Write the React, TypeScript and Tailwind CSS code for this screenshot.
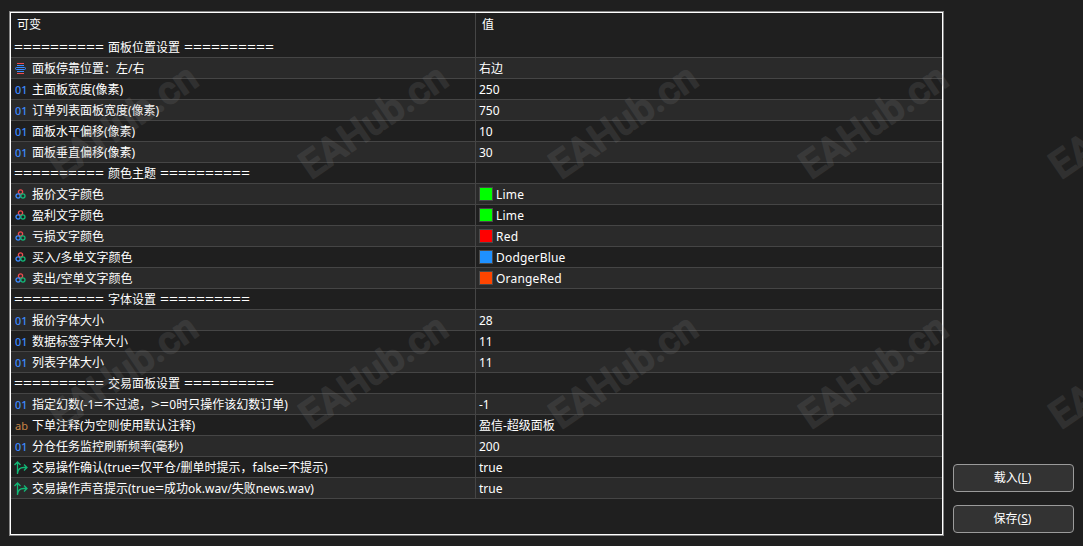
import type { ReactNode } from 'react';
import clsx from 'clsx';

type IconKind = 'enum' | 'int' | 'color' | 'string' | 'bool';

type Param = {
  label: string;
  icon?: IconKind;
  value?: string;
  swatch?: string;
};

const params: Param[] = [
  { label: '========== 面板位置设置 ==========' },
  { icon: 'enum', label: '面板停靠位置：左/右', value: '右边' },
  { icon: 'int', label: '主面板宽度(像素)', value: '250' },
  { icon: 'int', label: '订单列表面板宽度(像素)', value: '750' },
  { icon: 'int', label: '面板水平偏移(像素)', value: '10' },
  { icon: 'int', label: '面板垂直偏移(像素)', value: '30' },
  { label: '========== 颜色主题 ==========' },
  { icon: 'color', label: '报价文字颜色', value: 'Lime', swatch: 'bg-[#00ff00]' },
  { icon: 'color', label: '盈利文字颜色', value: 'Lime', swatch: 'bg-[#00ff00]' },
  { icon: 'color', label: '亏损文字颜色', value: 'Red', swatch: 'bg-[#ff0000]' },
  { icon: 'color', label: '买入/多单文字颜色', value: 'DodgerBlue', swatch: 'bg-[#1e90ff]' },
  { icon: 'color', label: '卖出/空单文字颜色', value: 'OrangeRed', swatch: 'bg-[#ff4500]' },
  { label: '========== 字体设置 ==========' },
  { icon: 'int', label: '报价字体大小', value: '28' },
  { icon: 'int', label: '数据标签字体大小', value: '11' },
  { icon: 'int', label: '列表字体大小', value: '11' },
  { label: '========== 交易面板设置 ==========' },
  { icon: 'int', label: '指定幻数(-1=不过滤，>=0时只操作该幻数订单)', value: '-1' },
  { icon: 'string', label: '下单注释(为空则使用默认注释)', value: '盈信-超级面板' },
  { icon: 'int', label: '分仓任务监控刷新频率(毫秒)', value: '200' },
  { icon: 'bool', label: '交易操作确认(true=仅平仓/删单时提示，false=不提示)', value: 'true' },
  { icon: 'bool', label: '交易操作声音提示(true=成功ok.wav/失败news.wav)', value: 'true' },
];

const EnumIcon = () => (
  <svg width="12" height="12" viewBox="0 0 12 12" fill="none">
    <path d="M2 .5h7M2 10.5h7" stroke="#f04a4e" />
    <path d="M2 2.5h7M2 8.5h7" stroke="#3d8bff" />
    <rect x=".5" y="4.5" width="10" height="2" rx="1" stroke="#3d8bff" />
  </svg>
);

const ColorIcon = () => (
  <svg width="12" height="12" viewBox="0 0 12 12" fill="none" strokeWidth="1.3">
    <circle cx="5.5" cy="3" r="2.1" stroke="#f04a4e" />
    <circle cx="3.1" cy="7" r="2.1" stroke="#3d8bff" />
    <circle cx="7.9" cy="7" r="2.1" stroke="#12b876" />
  </svg>
);

const BoolIcon = () => (
  <svg
    className="-ml-px"
    width="14"
    height="14"
    viewBox="0 0 14 14"
    fill="none"
    stroke="#12b876"
    strokeWidth="1.3"
  >
    <path d="M3.5 13V1M.5 4l3-3 3 3" />
    <path d="M3.5 12C4 8.5 6.5 6.5 9.5 6.5h3.5M10 3.5l3 3-3 3" />
  </svg>
);

const ParamIcon = ({ kind }: { kind: IconKind }) => {
  switch (kind) {
    case 'enum':
      return <EnumIcon />;
    case 'color':
      return <ColorIcon />;
    case 'bool':
      return <BoolIcon />;
    case 'string':
      return <span className="text-[11px] leading-[18px] text-[#c98547]">ab</span>;
    default:
      return (
        <span className="origin-left scale-x-[1.08] text-[10px] leading-[18px] font-medium text-[#3d8bff]">
          01
        </span>
      );
  }
};

// Comparison signs take a wide 9px cell each
const WideSigns = ({ text }: { text: string }) => (
  <span className="inline-block whitespace-pre [word-spacing:1px]">
    {text.split(/([=>])/).map((part, index) =>
      part === '=' || part === '>' ? (
        <span key={index} className="inline-block w-[9px]">
          <span className="inline-block origin-left scale-x-[1.31]">{part}</span>
        </span>
      ) : (
        part
      )
    )}
  </span>
);

const ParamRow = ({ param, striped }: { param: Param; striped: boolean }) => {
  const { label, icon, value, swatch } = param;
  return (
    <div className={clsx('flex h-[21px] border-b border-[#454545]', striped && 'bg-[#2a2a2a]')}>
      <div className="flex w-[465px] items-center border-r border-[#454545] pt-[2px] pl-[3px]">
        {icon && (
          <span className="flex w-[18px] items-center pl-px">
            <ParamIcon kind={icon} />
          </span>
        )}
        <WideSigns text={label} />
      </div>
      <div className="flex items-center gap-[3px] pl-[3px]">
        {swatch && <span className={clsx('size-[14px] border border-[#4a4a4a]', swatch)}></span>}
        <span className={clsx('pt-[2px]', swatch && 'tracking-[0.2px]')}>{value}</span>
      </div>
    </div>
  );
};

const ActionButton = ({ children }: { children: ReactNode }) => (
  <button className="h-7 w-[121px] rounded-[4px] border border-[#9b9b9b] bg-[#333333] pr-[2px] text-[12px]">
    {children}
  </button>
);

const Watermark = () => (
  <svg
    className="pointer-events-none absolute inset-0"
    width="1083"
    height="546"
    viewBox="0 0 1083 546"
  >
    {[180, 430].map((y) =>
      [61, 311, 561, 811, 1061].map((x) => (
        <g key={`${x}-${y}`} opacity="0.18">
          <text
            transform={`translate(${x} ${y}) rotate(-34.5)`}
            className="font-[Roboto] text-[38.4px] font-medium"
            fill="#808080"
            stroke="#808080"
            strokeWidth="1.6"
            strokeLinejoin="round"
          >
            EAHub.cn
          </text>
        </g>
      ))
    )}
  </svg>
);

export default function App() {
  return (
    <div className="relative flex h-[546px] w-[1083px] gap-[9px] overflow-hidden bg-[#1f1f1f] pt-[11px] pl-[9px] font-['Noto_Sans','Noto_Sans_CJK_SC',sans-serif] text-[12px] leading-[20px] text-white">
      <div className="h-[525px] w-[935px] border border-[#858585]">
        <div className="h-full border border-white">
          <div className="flex h-6">
            <div className="w-[465px] border-r border-[#454545] pt-[2px] pl-[6px]">可变</div>
            <div className="pt-[2px] pl-[6px]">值</div>
          </div>
          {params.map((param, index) => (
            <ParamRow key={index} param={param} striped={index % 2 === 1} />
          ))}
        </div>
      </div>
      <div className="flex flex-col gap-[13px] pt-[453px]">
        <ActionButton>
          载入(<span className="underline">L</span>)
        </ActionButton>
        <ActionButton>
          保存(<span className="underline">S</span>)
        </ActionButton>
      </div>
      <Watermark />
    </div>
  );
}
